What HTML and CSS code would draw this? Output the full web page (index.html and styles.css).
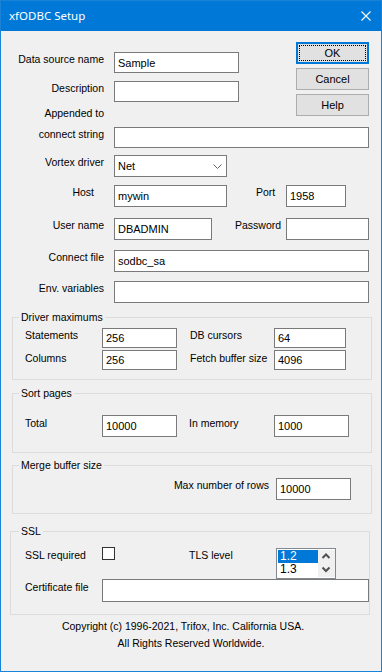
FILE: index.html
```html
<!DOCTYPE html>
<html>
<head>
	<meta charset="utf-8"/>
	<title>xfODBC Setup</title>
	<link rel="stylesheet" href="styles.css">
</head>
<body>
	<div id="dialog">
		<div id="titlebar">
			<span id="title">xfODBC Setup</span>
			<svg class="close" width="10" height="10" viewBox="0 0 10 10"><path d="M0.5 0.5L9.5 9.5M9.5 0.5L0.5 9.5" stroke="#fff" stroke-width="1.1" fill="none"/></svg>
		</div>

		<div class="top">
			<div class="fields">
				<div class="row r1">
					<label class="lbl">Data source name</label>
					<input class="txt w125" type="text" value="Sample"/>
				</div>
				<div class="row r2">
					<label class="lbl">Description</label>
					<input class="txt w125" type="text" value=""/>
				</div>
				<div class="row r3">
					<label class="lbl">Appended to</label>
				</div>
			</div>
			<div class="buttons">
				<button class="btn default"><span>OK</span></button>
				<button class="btn">Cancel</button>
				<button class="btn">Help</button>
			</div>
		</div>

		<div class="row r4">
			<label class="lbl">connect string</label>
			<input class="txt w255" type="text" value=""/>
		</div>
		<div class="row r5">
			<label class="lbl">Vortex driver</label>
			<div class="combo">
				<span>Net</span>
				<svg width="9" height="5" viewBox="0 0 9 5"><path d="M0.5 0.5L4.5 4.5L8.5 0.5" stroke="#606060" stroke-width="1" fill="none"/></svg>
			</div>
		</div>
		<div class="row r6">
			<label class="lbl host">Host</label>
			<input class="txt tall w113" type="text" value="mywin"/>
			<label class="lbl2 port">Port</label>
			<input class="txt tall w60" type="text" value="1958"/>
		</div>
		<div class="row r7">
			<label class="lbl">User name</label>
			<input class="txt tall w98" type="text" value="DBADMIN"/>
			<label class="lbl2 pass">Password</label>
			<input class="txt tall w83" type="text" value=""/>
		</div>
		<div class="row r8">
			<label class="lbl">Connect file</label>
			<input class="txt tall w255" type="text" value="sodbc_sa"/>
		</div>
		<div class="row r9">
			<label class="lbl">Env. variables</label>
			<input class="txt tall w255" type="text" value=""/>
		</div>

		<fieldset class="group g-driver">
			<legend>Driver maximums</legend>
			<div class="grow gr1">
				<label class="glbl">Statements</label>
				<input class="txt num w75" type="text" value="256"/>
				<label class="glbl2">DB cursors</label>
				<input class="txt num w72" type="text" value="64"/>
			</div>
			<div class="grow gr2">
				<label class="glbl">Columns</label>
				<input class="txt num w75" type="text" value="256"/>
				<label class="glbl2">Fetch buffer size</label>
				<input class="txt num w72" type="text" value="4096"/>
			</div>
		</fieldset>

		<fieldset class="group g-sort">
			<legend>Sort pages</legend>
			<div class="grow gs1">
				<label class="glbl">Total</label>
				<input class="txt tall w75" type="text" value="10000"/>
				<label class="glbl2 mem">In memory</label>
				<input class="txt tall w75" type="text" value="1000"/>
			</div>
		</fieldset>

		<fieldset class="group g-merge">
			<legend>Merge buffer size</legend>
			<div class="grow gm1">
				<label class="rows-lbl">Max number of rows</label>
				<input class="txt tall w75" type="text" value="10000"/>
			</div>
		</fieldset>

		<fieldset class="group g-ssl">
			<legend>SSL</legend>
			<div class="grow gl1">
				<label class="glbl">SSL required</label>
				<input class="check" type="checkbox"/>
				<label class="tls-lbl">TLS level</label>
				<div class="listbox">
					<div class="items">
						<div class="item sel">1.2</div>
						<div class="item">1.3</div>
					</div>
					<div class="spin">
						<svg width="16" height="13" viewBox="0 0 16 13"><path d="M4.5 8L8 4.5L11.5 8" stroke="#505050" stroke-width="2" fill="none"/></svg>
						<svg width="16" height="13" viewBox="0 0 16 13"><path d="M4.5 4.5L8 8L11.5 4.5" stroke="#505050" stroke-width="2" fill="none"/></svg>
					</div>
				</div>
			</div>
			<div class="grow gl2">
				<label class="glbl">Certificate file</label>
				<input class="txt cert" type="text" value=""/>
			</div>
		</fieldset>

		<div class="copy">
			<p class="line1">Copyright (c) 1996-2021, Trifox, Inc. California USA.</p>
			<p>All Rights Reserved Worldwide.</p>
		</div>
	</div>
</body>
</html>
```

FILE: styles.css
```css
*{
	margin:0;
	padding:0;
	box-sizing:border-box;
}
body{
	margin:0;
	background:#fff;
	font-family:"Liberation Sans", Arial, sans-serif;
	font-size:10.5px;
	color:#000;
}
#dialog{
	width:382px;
	height:672px;
	border:1px solid #1883d7;
	background:#f0f0f0;
	overflow:hidden;
}
#titlebar{
	height:30px;
	background:#0078d7;
	display:flex;
	align-items:center;
	justify-content:space-between;
	padding:0 10px 0 8px;
	color:#fff;
	font-family:"Noto Sans", sans-serif;
	font-size:11.5px;
}
#title{
	line-height:16px;
}

/* top form */
.top{
	display:flex;
}
.fields{
	width:295px;
	flex:none;
}
.buttons{
	display:flex;
	flex-direction:column;
	gap:4px;
	padding-top:11px;
}
.btn{
	width:73px;
	height:22px;
	border:1px solid #adadad;
	background:#e1e1e1;
	font:inherit;
	font-size:11px;
	color:#000;
}
.btn.default{
	border:2px solid #0078d7;
	padding:1px;
}
.btn.default span{
	display:block;
	height:100%;
	border:1px dotted #000;
	line-height:14px;
}

.row{
	display:flex;
	align-items:flex-start;
}
.lbl{
	width:103px;
	flex:none;
	text-align:right;
	line-height:14px;
	margin-right:10px;
}
.lbl.host{
	padding-right:10px;
}
.lbl2{
	flex:none;
	line-height:14px;
}
.port{
	width:59px;
	padding-left:29px;
}
.pass{
	width:74px;
	padding-left:23px;
}
.r1{ margin-top:21px; }
.r2{ margin-top:8px; }
.r3{ margin-top:4px; }
.r4{ margin-top:7px; }
.r5{ margin-top:7px; }
.r6{ margin-top:8px; }
.r7{ margin-top:11px; }
.r8{ margin-top:10px; }
.r9{ margin-top:9px; }

.txt{
	height:21px;
	border:1px solid #7a7a7a;
	background:#fff;
	padding:0 3px;
	font:inherit;
	font-size:11px;
	color:#000;
	outline:none;
	flex:none;
}
.txt.tall{ height:22px; }
.txt.num{ height:20px; }
.w60{ width:60px; }
.w72{ width:72px; }
.w75{ width:75px; }
.w83{ width:83px; }
.w98{ width:98px; }
.w113{ width:113px; }
.w125{ width:125px; }
.w255{ width:255px; }

.combo{
	width:113px;
	height:22px;
	border:1px solid #7a7a7a;
	background:#fff;
	display:flex;
	align-items:center;
	justify-content:space-between;
	padding:0 4px 0 3px;
	font-size:11px;
}

/* group boxes */
.group{
	border:1px solid #dcdcdc;
	padding:0;
	min-inline-size:0;
	width:360px;
}
.group legend{
	line-height:14px;
	padding:0 2px;
	margin-left:6px;
}
.grow{
	display:flex;
	align-items:flex-start;
}
.glbl{
	width:77px;
	flex:none;
	line-height:14px;
}
.glbl2{
	width:84px;
	margin-left:13px;
	flex:none;
	line-height:14px;
}
.glbl2.mem{
	width:85px;
	margin-left:12px;
	margin-top:1px;
}

.g-driver{
	margin:7px 0 0 11px;
	padding-bottom:9px;
}
.g-driver .grow,
.g-sort .grow{
	padding-left:12px;
}
.gr1{ margin-top:4px; }
.gr2{ margin-top:2px; }
.gr2 label{ margin-top:1px; }

.g-sort{
	margin:6px 0 0 11px;
	padding-bottom:15px;
}
.gs1{ margin-top:15px; }
.gs1 .glbl{ margin-top:1px; }

.g-merge{
	margin:5px 0 0 11px;
	padding-bottom:13px;
}
.gm1{ margin-top:6px; }
.rows-lbl{
	width:256px;
	text-align:right;
	margin-right:7px;
	line-height:14px;
}

.g-ssl{
	margin:10px 0 0 9px;
	padding-bottom:12px;
}
.g-ssl legend{
	margin-left:8px;
}
.g-ssl .grow{
	padding-left:14px;
}
.gl1{
	margin-top:9px;
	height:14px;
}
.gl1 .glbl{ margin-top:1px; }
.check{
	appearance:none;
	-webkit-appearance:none;
	width:13px;
	height:13px;
	border:1px solid #333;
	background:#fff;
	flex:none;
}
.tls-lbl{
	width:87px;
	margin-left:74px;
	margin-top:1px;
	line-height:14px;
	flex:none;
}
.listbox{
	width:60px;
	height:31px;
	margin-top:1px;
	border:1px solid #828790;
	background:#fff;
	display:flex;
	padding:1px 0 1px 1px;
	flex:none;
	position:relative;
}
.items{
	width:40px;
	font-size:12px;
}
.item{
	height:13px;
	line-height:13px;
	padding-left:2px;
	overflow:hidden;
}
.item.sel{
	background:#0078d7;
	color:#fff;
}
.spin{
	width:17px;
	background:#f0f0f0;
	display:flex;
	flex-direction:column;
}
.gl2{ margin-top:18px; }
.gl2 .glbl{ margin-top:1px; }
.cert{
	width:267px;
	height:23px;
}

.copy{
	margin-top:3px;
	text-align:center;
	line-height:17px;
}
.copy .line1{
	padding-right:16px;
}
```
